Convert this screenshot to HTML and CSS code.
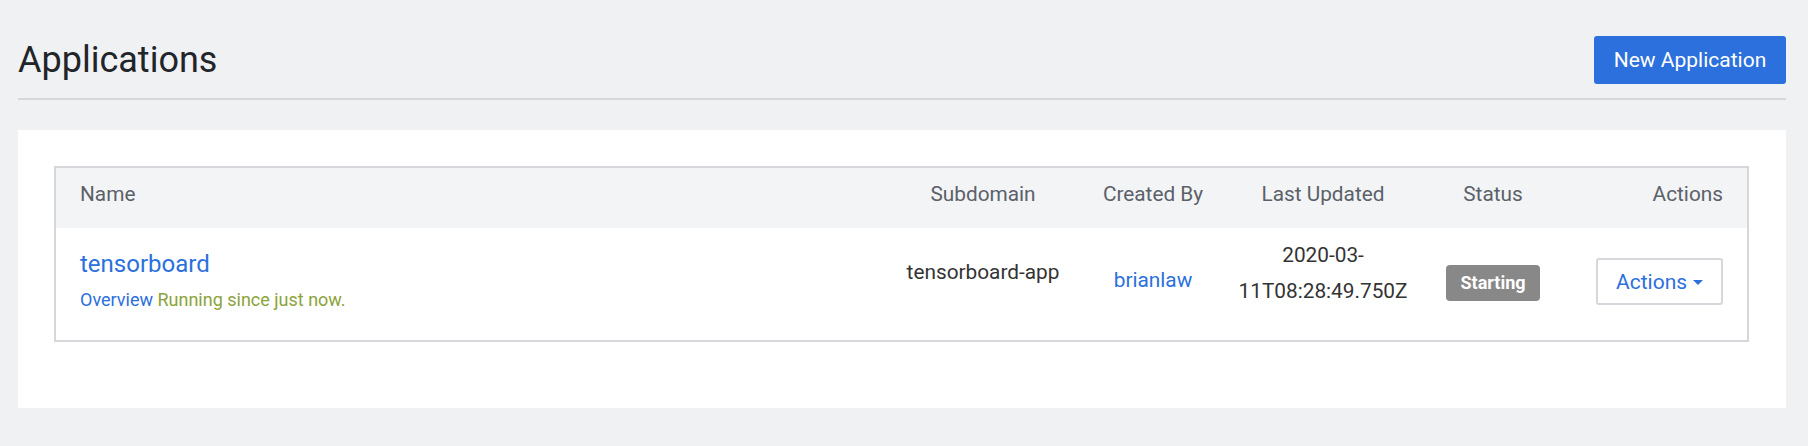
FILE: index.html
```html
<!DOCTYPE html>
<html>
<head>
<meta charset="utf-8">
<link rel="stylesheet" href="styles.css">
</head>
<body>
<div class="page">
  <header class="page-header">
    <h1 class="title">Applications</h1>
    <button class="btn-primary">New Application</button>
  </header>
  <section class="card">
    <div class="apps-table">
      <div class="thead">
        <div class="th th-name">Name</div>
        <div class="th">Subdomain</div>
        <div class="th">Created By</div>
        <div class="th">Last Updated</div>
        <div class="th">Status</div>
        <div class="th th-actions">Actions</div>
      </div>
      <div class="tbody-row">
        <div class="td td-name">
          <a class="app-name">tensorboard</a>
          <div class="app-sub"><a class="sub-link">Overview</a> <span class="running">Running since just now.</span></div>
        </div>
        <div class="td td-subdomain">tensorboard-app</div>
        <div class="td td-creator"><a class="user-link">brianlaw</a></div>
        <div class="td td-updated">2020-03-11T08:28:49.750Z</div>
        <div class="td td-status"><span class="badge">Starting</span></div>
        <div class="td td-actions">
          <button class="btn-actions">Actions<span class="caret"></span></button>
        </div>
      </div>
    </div>
  </section>
</div>
</body>
</html>
```

FILE: styles.css
```css
* { box-sizing: border-box; }
html, body { margin: 0; padding: 0; }
body {
  background: #f0f1f3;
  font-family: Roboto, "Liberation Sans", Arial, sans-serif;
  font-size: 18px;
  color: #333;
  width: 1808px;
  height: 446px;
  overflow: hidden;
}
.page {
  padding: 36px 22px 0 18px;
}
.page-header {
  display: flex;
  align-items: center;
  justify-content: space-between;
  padding-bottom: 14px;
  border-bottom: 2px solid #d6d7da;
}
.title {
  margin: 0;
  font-size: 36px;
  font-weight: 400;
  line-height: 48px;
  color: #212529;
}
.btn-primary {
  height: 48px;
  width: 192px;
  border: none;
  border-radius: 3px;
  background: #2b70dc;
  color: #fff;
  font-family: inherit;
  font-size: 21px;
  padding: 0;
}
.card {
  margin-top: 30px;
  background: #fff;
  padding: 36px 37px 66px 36px;
}
.apps-table {
  border: 2px solid #d6d7db;
}
.thead, .tbody-row {
  display: grid;
  grid-template-columns: 1fr 170px 170px 170px 170px 169px;
}
.thead {
  background: #f3f4f6;
  height: 60px;
}
.th {
  font-size: 20.8px;
  line-height: 36px;
  padding-top: 8px;
  color: #5b6169;
  text-align: center;
}
.th-name { text-align: left; padding-left: 24px; }
.th-actions { text-align: right; padding-right: 24px; }
.tbody-row {
  height: 112px;
  background: #fff;
}
.td {
  font-size: 20.8px;
  line-height: 36px;
  text-align: center;
  color: #333;
}
.td-name {
  text-align: left;
  padding: 22px 0 0 24px;
}
.app-name {
  display: block;
  font-size: 24px;
  line-height: 28px;
  color: #2b70dc;
}
.app-sub {
  margin-top: 10px;
  font-size: 18px;
  line-height: 24px;
}
.sub-link { color: #2b70dc; }
.running { color: #8ba33a; }
.td-subdomain { padding-top: 26px; }
.td-creator { padding-top: 34px; }
.user-link { color: #2b70dc; }
.td-updated { padding-top: 9px; }
.td-status { padding-top: 36px; }
.badge {
  display: inline-flex;
  align-items: center;
  justify-content: center;
  width: 94px;
  height: 36px;
  border-radius: 4px;
  background: #888;
  color: #fff;
  font-size: 18px;
  font-weight: 700;
  line-height: 1;
}
.td-actions {
  text-align: right;
  padding: 30px 24px 0 0;
}
.btn-actions {
  display: inline-flex;
  align-items: center;
  gap: 6px;
  height: 47px;
  width: 127px;
  padding: 0 0 0 18px;
  background: #fff;
  border: 2px solid #d6d7db;
  border-radius: 3px;
  color: #2b70dc;
  font-family: inherit;
  font-size: 21px;
}
.caret {
  display: inline-block;
  width: 0;
  height: 0;
  border-left: 5px solid transparent;
  border-right: 5px solid transparent;
  border-top: 5px solid #2b70dc;
  margin-top: 2px;
}
```
